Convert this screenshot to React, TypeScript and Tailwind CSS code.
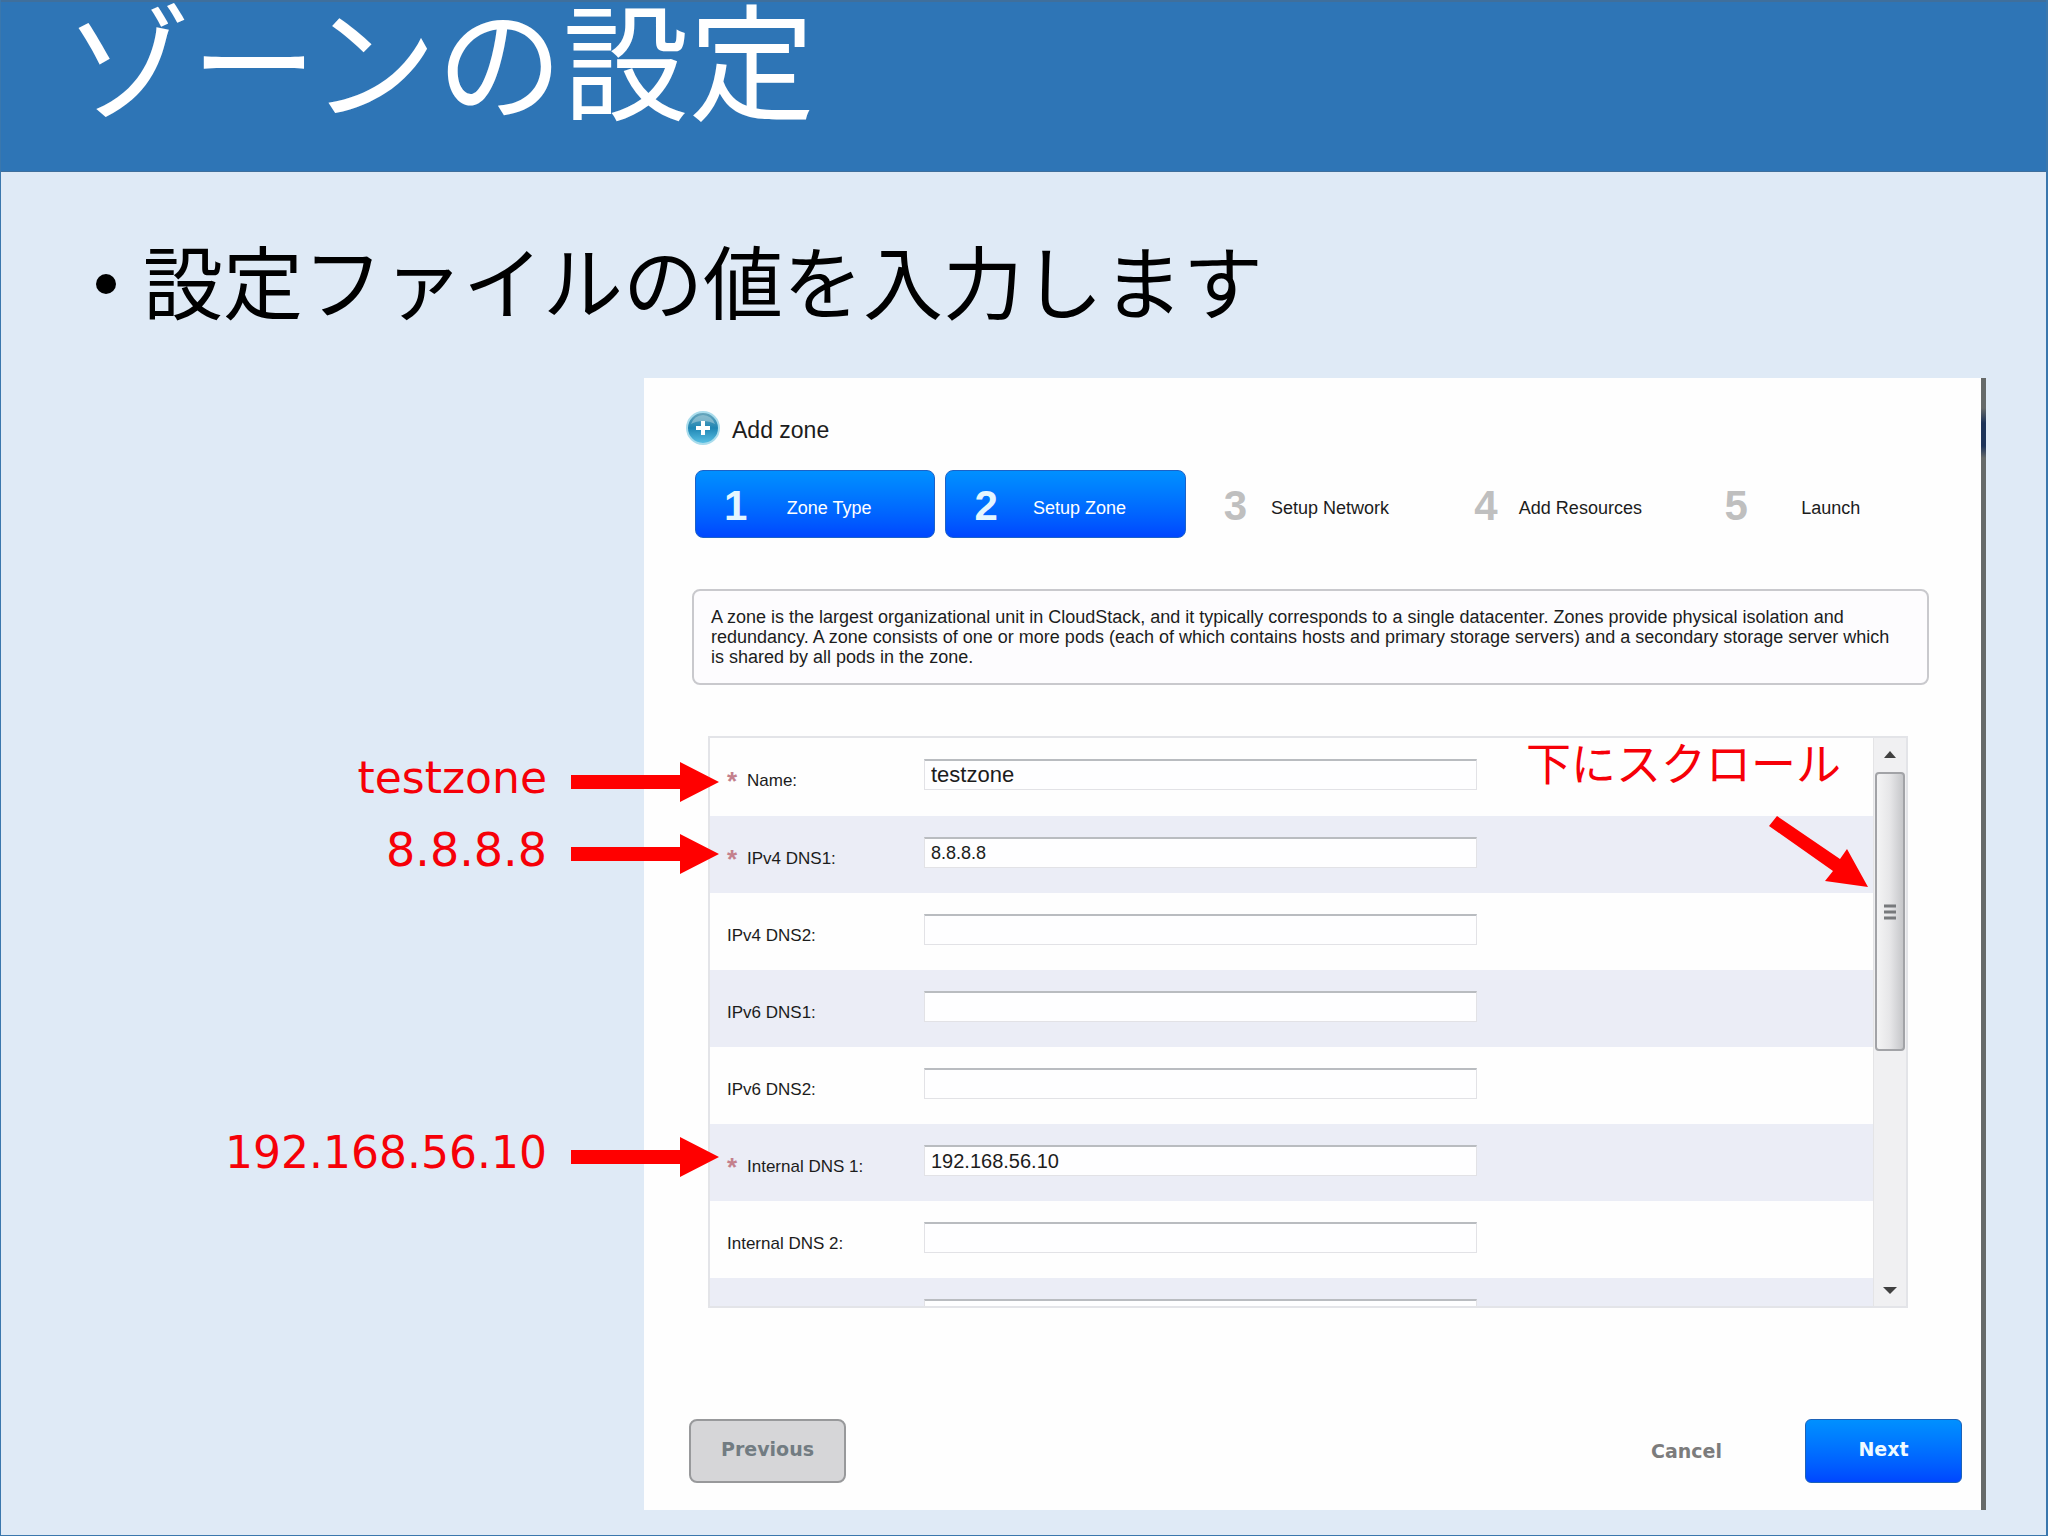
import React from "react";
import clsx from "clsx";

interface Step {
  number: number;
  title: string;
  active: boolean;
}

interface Field {
  id: string;
  label: string;
  value: string;
  required?: boolean;
  textSize?: string;
}

const steps: Step[] = [
  { number: 1, title: "Zone Type", active: true },
  { number: 2, title: "Setup Zone", active: true },
  { number: 3, title: "Setup Network", active: false },
  { number: 4, title: "Add Resources", active: false },
  { number: 5, title: "Launch", active: false }
];

const fields: Field[] = [
  { id: "name", label: "Name:", value: "testzone", required: true, textSize: "text-[22px]" },
  { id: "ipv4-dns1", label: "IPv4 DNS1:", value: "8.8.8.8", required: true, textSize: "text-[18px]" },
  { id: "ipv4-dns2", label: "IPv4 DNS2:", value: "" },
  { id: "ipv6-dns1", label: "IPv6 DNS1:", value: "" },
  { id: "ipv6-dns2", label: "IPv6 DNS2:", value: "" },
  { id: "internal-dns1", label: "Internal DNS 1:", value: "192.168.56.10", required: true, textSize: "text-[20px]" },
  { id: "internal-dns2", label: "Internal DNS 2:", value: "" },
  { id: "network-domain", label: "", value: "" }
];

function AddIcon() {
  return (
    <svg width="34" height="34" viewBox="0 0 34 34" aria-hidden="true">
      <defs>
        <linearGradient id="add-ball" x1="0" y1="0" x2="0" y2="1">
          <stop offset="0" stopColor="#6fa9bd" />
          <stop offset="0.5" stopColor="#1f86b4" />
          <stop offset="1" stopColor="#5cc3e6" />
        </linearGradient>
      </defs>
      <circle cx="17" cy="17" r="16" fill="url(#add-ball)" stroke="#a9dcec" strokeWidth="2" />
      <path d="M5 13a12.500 12.500 0 0 1 24 0c-7-4-17-4-24 0z" fill="#a5cddb" opacity="0.6" />
      <path d="M17 10v14M10 17h14" stroke="#fff" strokeWidth="4" />
    </svg>
  );
}

function Arrow() {
  return (
    <svg className="shrink-0" width="148" height="40" viewBox="0 0 148 40" aria-hidden="true">
      <path d="M0 13h109V0l39 20-39 20V27H0z" fill="#ff0000" />
    </svg>
  );
}

function Note({ text, size }: { text: string; size: string }) {
  return (
    <div className="flex h-[72px] items-center justify-end gap-6">
      <span className={clsx("pb-2 leading-none text-[#f60008]", size)}>{text}</span>
      <Arrow />
    </div>
  );
}

function StepItem({ step }: { step: Step }) {
  return (
    <li
      className={clsx(
        "flex h-[68px] items-center rounded-lg pr-7 pl-7",
        step.active && "border border-[#1c62c8] bg-linear-to-b from-[#0090ff] to-[#0046ff] text-white"
      )}
    >
      <span
        className={clsx(
          "w-7 pt-1 text-[42px] leading-none font-bold",
          step.active ? "text-[#e4f6ff]" : "text-[#bfbfbf]"
        )}
      >
        {step.number}
      </span>
      <span className="flex-1 pt-2 text-center text-[18px] leading-6 whitespace-nowrap">{step.title}</span>
    </li>
  );
}

function FieldRow({ field }: { field: Field }) {
  return (
    <div className="flex h-[77px] shrink-0 items-start pl-[17px] first:h-[78px] even:bg-[#ebedf6]">
      <label htmlFor={field.id} className="flex w-[197px] shrink-0 pt-[31px] text-[17px] leading-6">
        {field.required && <span className="w-5 text-[26px] font-bold text-[#c4808c]">*</span>}
        {field.label}
      </label>
      <input
        id={field.id}
        type="text"
        defaultValue={field.value}
        aria-label={field.label || "Network Domain"}
        className={clsx(
          "mt-[21px] h-[31px] w-[553px] border border-t-2 border-[#e2e2e6] border-t-[#b9bcc0] bg-[#fefeff] px-1.5 leading-6",
          field.textSize
        )}
      />
    </div>
  );
}

function ScrollBar() {
  return (
    <div className="flex w-[33px] shrink-0 flex-col items-center border-l border-[#e4e4e6] bg-[#f0f0f2]">
      <svg className="shrink-0" width="32" height="34" viewBox="0 0 32 34" aria-hidden="true">
        <path d="M10 20l6-7 6 7z" fill="#404040" />
      </svg>
      <div className="flex h-[279px] w-[30px] shrink-0 items-center justify-center rounded-sm border-2 border-[#a2a3a7] bg-linear-to-r from-[#f4f4f5] via-[#e6e6e8] to-[#c6c7ca]">
        <svg width="14" height="18" viewBox="0 0 14 18" aria-hidden="true">
          <path d="M1 3h12M1 9h12M1 15h12" stroke="#77797c" strokeWidth="3" />
        </svg>
      </div>
      <svg className="mt-auto shrink-0" width="32" height="32" viewBox="0 0 32 32" aria-hidden="true">
        <path d="M9 13h14l-7 7z" fill="#404040" />
      </svg>
    </div>
  );
}

function ZoneForm() {
  return (
    <div className="relative mt-[51px] mr-[21px] ml-4 flex h-[572px] border-2 border-[#e3e4e8]">
      <div className="flex flex-1 flex-col overflow-hidden">
        {fields.map((field) => (
          <FieldRow key={field.id} field={field} />
        ))}
      </div>
      <ScrollBar />
      <div className="absolute top-0 right-[38px] flex w-[342px] flex-col text-[#f60008]">
        <span className="text-[45px] leading-[56px] whitespace-nowrap">下にスクロール</span>
        <svg className="mt-[22px] self-end" width="100" height="72" viewBox="0 0 100 72" aria-hidden="true">
          <path d="M9 0L72 43L79 33L100 71L57 65L65 55L1 10z" fill="#ff0000" />
        </svg>
      </div>
    </div>
  );
}

function Wizard() {
  return (
    <div className="flex flex-1 bg-[#fefefe]">
      <div className="flex flex-1 flex-col pt-[33px] pr-[52px] pb-[27px] pl-12 font-['Liberation_Sans','Noto_Sans_CJK_JP',sans-serif] text-[#1c1c1c]">
        <h2 className="-ml-1.5 flex h-[34px] items-center gap-3 text-[23px] leading-[30px]">
          <AddIcon />
          <span className="pt-1">Add zone</span>
        </h2>
        <ol className="mt-[25px] ml-[3px] -mr-2 grid grid-cols-5 gap-2.5">
          {steps.map((step) => (
            <StepItem key={step.number} step={step} />
          ))}
        </ol>
        <p className="mt-[51px] min-h-[95px] rounded-lg border-2 border-[#c9c9cd] bg-[#fdfcfe] py-4 pr-8 pl-[17px] text-[18px] leading-5">
          A zone is the largest organizational unit in CloudStack, and it typically corresponds to a single datacenter. Zones provide physical isolation and
          redundancy. A zone consists of one or more pods (each of which contains hosts and primary storage servers) and a secondary storage server which
          is shared by all pods in the zone.
        </p>
        <ZoneForm />
        <div className="mt-[111px] -mr-[33px] -ml-[3px] flex items-center font-['DejaVu_Sans',sans-serif] text-[19px] font-bold">
          <button type="button" className="h-16 w-[157px] rounded-lg border-2 border-[#98999b] bg-[#d6d6d8] pb-1 text-[#727c82]">
            Previous
          </button>
          <button type="button" className="mr-[83px] ml-auto text-[#7c7c7c]">
            Cancel
          </button>
          <button type="button" className="h-16 w-[157px] rounded-md border border-[#1c62b8] bg-linear-to-b from-[#0090ff] to-[#0046ff] pb-1 text-[#effaff]">
            Next
          </button>
        </div>
      </div>
      <div className="w-[5px] bg-[linear-gradient(#666a69_0px,#666a69_30px,#1d3358_45px,#1d3358_68px,#666a69_80px)]" />
    </div>
  );
}

export default function App() {
  return (
    <main className="flex min-h-screen flex-col border-2 border-t-0 border-l border-[#3a77ad] bg-[#dfeaf6] font-['DejaVu_Sans','Noto_Sans_CJK_JP',sans-serif] text-black">
      <header className="h-[172px] border-t-2 border-b border-[#3f6f9c] bg-[#2e75b6] pl-16 font-['Noto_Sans_CJK_JP',sans-serif]">
        <h1 className="text-[126px] leading-[108px] text-white">ゾーンの設定</h1>
      </header>
      <ul className="mt-[58px] pl-[95px] font-['Noto_Sans_CJK_JP',sans-serif] text-[80px] leading-[96px]">
        <li className="flex items-center">
          <span className="mt-3 mr-[27px] size-5 rounded-full bg-black" />
          設定ファイルの値を入力します
        </li>
      </ul>
      <section className="mt-[52px] mb-[25px] flex pr-[60px]">
        <aside className="z-10 -mr-[75px] w-[718px] shrink-0 pt-[368px]">
          <Note text="testzone" size="text-[44px]" />
          <Note text="8.8.8.8" size="text-[46px]" />
          <div className="mt-[231px]">
            <Note text="192.168.56.10" size="text-[44px]" />
          </div>
        </aside>
        <Wizard />
      </section>
    </main>
  );
}
